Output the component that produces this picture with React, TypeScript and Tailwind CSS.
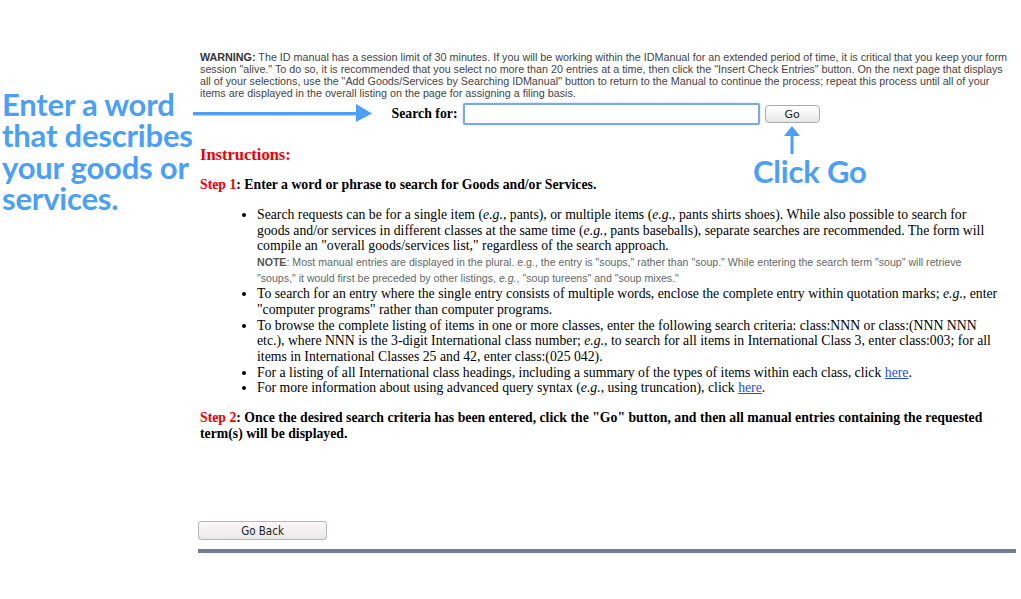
import React from "react";

const serif = { fontFamily: '"Liberation Serif", "Times New Roman", serif' };

function Em({ children }: { children: React.ReactNode }) {
  return <i>{children}</i>;
}

export default function App() {
  return (
    <div className="relative min-h-[599px] w-[1021px] bg-white text-black">
      <main className="ml-[200px] w-[815px] pt-[51px]" style={serif}>
        {/* Session warning */}
        <p className="text-[10.75px] leading-[12px] text-[#444] font-['Liberation_Sans',Arial,sans-serif]">
          <b className="text-[#333]">WARNING:</b> The ID manual has a session limit of 30 minutes. If you will be working within the IDManual for an extended period of time, it is critical that you keep your form session "alive." To do so, it is recommended that you select no more than 20 entries at a time, then click the "Insert Check Entries" button. On the next page that displays all of your selections, use the "Add Goods/Services by Searching IDManual" button to return to the Manual to continue the process; repeat this process until all of your items are displayed in the overall listing on the page for assigning a filing basis.
        </p>

        {/* Search row */}
        <div className="mt-[4px] flex items-center justify-center gap-[5px] pr-[4px]">
          <label className="text-[13.8px] font-bold">Search for:</label>
          <input
            className="h-[22px] w-[297px] rounded-[2px] border-2 border-[#7ea9dc] bg-white px-1 text-[13px] outline-none shadow-[0_0_2px_#9fc3ee]"
            defaultValue=""
          />
          <button className="h-[18px] w-[55px] rounded-[4px] border border-[#aaa] bg-gradient-to-b from-white to-[#e6e6e6] text-[11px] leading-none text-[#222] font-['DejaVu_Sans',sans-serif]">
            Go
          </button>
        </div>

        <h2 className="mt-[20px] text-[16.5px] leading-[20px] font-bold text-[#e00]">Instructions:</h2>

        <p className="mt-[12px] text-[13.75px] leading-[16px] font-bold">
          <span className="text-[#e00]">Step 1</span>: Enter a word or phrase to search for Goods and/or Services.
        </p>

        <ul className="mt-[14px] list-disc pl-[57px] pr-[15px] text-[13.75px] leading-[15.7px]">
          <li>
            Search requests can be for a single item (<Em>e.g.</Em>, pants), or multiple items (<Em>e.g.</Em>, pants shirts shoes). While also possible to search for goods and/or services in different classes at the same time (<Em>e.g.</Em>, pants baseballs), separate searches are recommended. The form will compile an "overall goods/services list," regardless of the search approach.
            <div className="text-[10.6px] leading-[16px] text-[#666] font-['Liberation_Sans',Arial,sans-serif]">
              <b className="text-[#555]">NOTE</b>: Most manual entries are displayed in the plural. e.g., the entry is "soups," rather than "soup." While entering the search term "soup" will retrieve "soups," it would first be preceded by other listings, <i>e.g.</i>, "soup tureens" and "soup mixes."
            </div>
          </li>
          <li>
            To search for an entry where the single entry consists of multiple words, enclose the complete entry within quotation marks; <Em>e.g.</Em>, enter "computer programs" rather than computer programs.
          </li>
          <li>
            To browse the complete listing of items in one or more classes, enter the following search criteria: class:NNN or class:(NNN NNN etc.), where NNN is the 3-digit International class number; <Em>e.g.</Em>, to search for all items in International Class 3, enter class:003; for all items in International Classes 25 and 42, enter class:(025 042).
          </li>
          <li>
            For a listing of all International class headings, including a summary of the types of items within each class, click{" "}
            <a href="#" className="text-[#1d4fd8] underline">here</a>.
          </li>
          <li>
            For more information about using advanced query syntax (<Em>e.g.</Em>, using truncation), click{" "}
            <a href="#" className="text-[#1d4fd8] underline">here</a>.
          </li>
        </ul>

        <p className="mt-[14px] pr-[30px] text-[13.75px] leading-[15.7px] font-bold">
          <span className="text-[#e00]">Step 2</span>: Once the desired search criteria has been entered, click the "Go" button, and then all manual entries containing the requested term(s) will be displayed.
        </p>

        <button className="ml-[-2px] mt-[80px] h-[19px] w-[129px] rounded-[3px] border border-[#b5b5b5] bg-gradient-to-b from-[#fdf6fa] to-[#e8e8e8] pt-[2px] text-[11.5px] leading-none text-[#222] font-['DejaVu_Sans_Condensed','DejaVu_Sans',sans-serif]">
          Go Back
        </button>
        <div className="ml-[-2px] mt-[7px] h-[4px] w-[818px] bg-[#6f7f99]" />
      </main>

      {/* Annotations */}
      <div className="absolute left-[2px] top-[89px] text-[31px] leading-[31.4px] font-bold text-[#4b9ff6] font-['Lato',sans-serif] tracking-[-0.2px]">
        Enter a word
        <br />
        that describes
        <br />
        your goods or
        <br />
        services.
      </div>
      <svg className="absolute left-[193px] top-[104px]" width="180" height="18" viewBox="0 0 180 18">
        <rect x="0" y="8" width="166" height="3.4" fill="#4b9ff6" />
        <polygon points="163,0 179,9.5 163,18" fill="#4b9ff6" />
      </svg>
      <svg className="absolute left-[783px] top-[126px]" width="18" height="28" viewBox="0 0 18 28">
        <polygon points="9,0 17,10 1,10" fill="#4b9ff6" />
        <rect x="7.5" y="8" width="3" height="20" fill="#4b9ff6" />
      </svg>
      <div className="absolute left-[753px] top-[156px] text-[31px] leading-[31px] font-bold text-[#4b9ff6] font-['Lato',sans-serif] tracking-[-0.2px]">
        Click Go
      </div>
    </div>
  );
}
